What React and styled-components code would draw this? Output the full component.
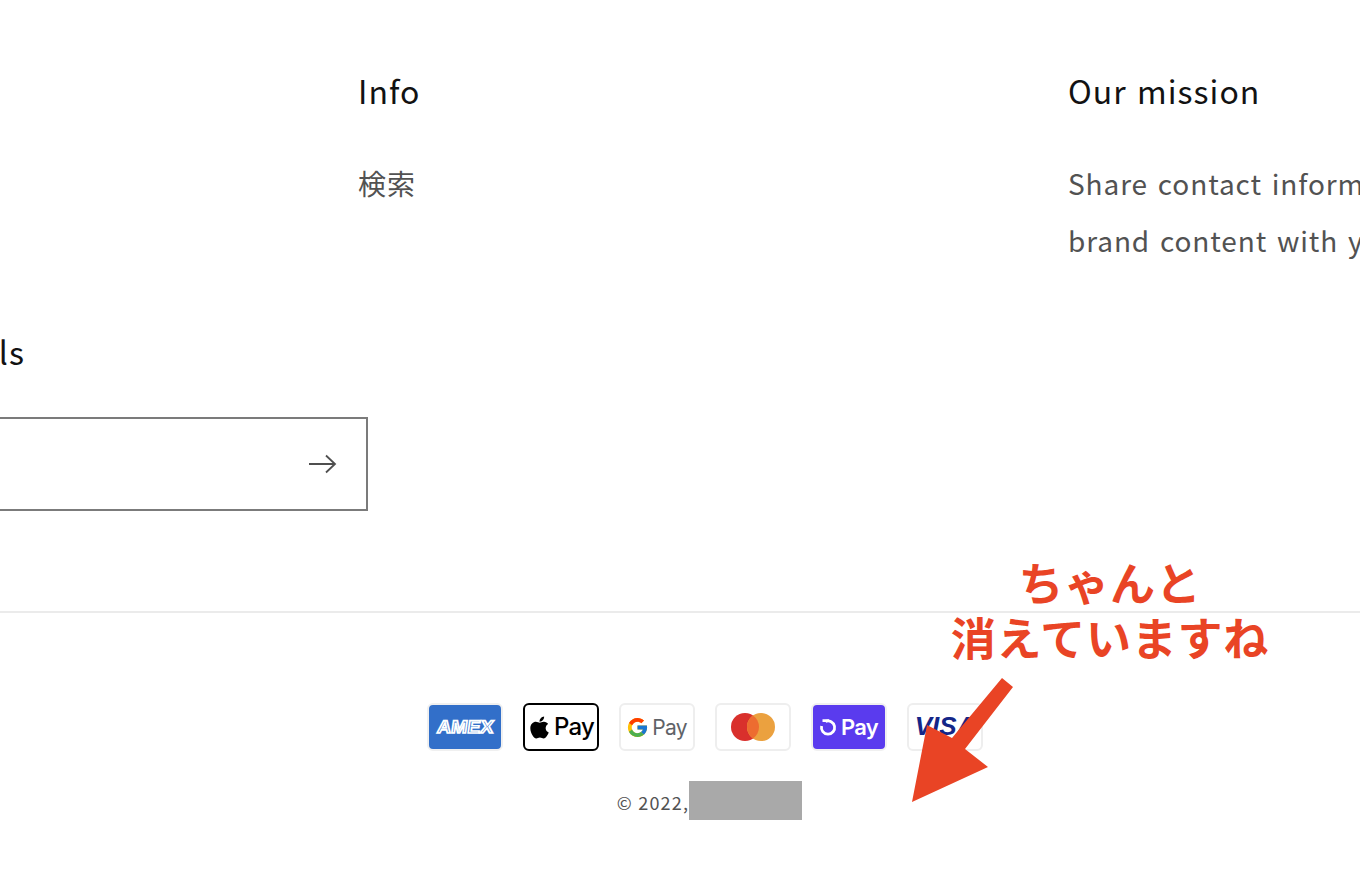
import styled, { createGlobalStyle } from 'styled-components'
import { FaApple } from 'react-icons/fa'
import { FcGoogle } from 'react-icons/fc'

const GlobalStyle = createGlobalStyle`
  html, body {
    margin: 0;
    padding: 0;
    background: #fff;
    overflow: hidden;
  }
  body {
    font-family: "Noto Sans CJK JP", "Noto Sans", sans-serif;
  }
`

const Page = styled.div`
  width: 1360px;
  height: 884px;
  position: relative;
  overflow: hidden;
  background: #fff;
`

const TopRow = styled.div`
  display: flex;
  padding: 62px 0 0 358px;
  height: 263px;
  box-sizing: content-box;
`

const Column = styled.div`
  flex: none;
  width: ${(props) => props.$width}px;
`

const Heading = styled.h2`
  margin: 0;
  font-size: 32px;
  line-height: 56px;
  font-weight: 400;
  letter-spacing: 1.05px;
  word-spacing: 2px;
  color: #121212;
  white-space: nowrap;
`

const BodyText = styled.p`
  margin: 37px 0 0;
  font-size: 28px;
  line-height: 57px;
  font-weight: 400;
  letter-spacing: 0.9px;
  word-spacing: 2.6px;
  color: #525252;
  white-space: nowrap;
`

const Newsletter = styled.section`
  width: 367px;
  margin-top: -2px;
`

const NewsletterHeading = styled(Heading)`
  display: flex;
  justify-content: flex-end;
  width: 25px;
`

const EmailBox = styled.div`
  display: flex;
  align-items: center;
  justify-content: flex-end;
  box-sizing: border-box;
  width: 388px;
  height: 94px;
  margin: 38px 0 0 -20px;
  padding-right: 29px;
  border: 2px solid #7b7b7b;
`

const Divider = styled.hr`
  margin: 100px 0 0;
  border: 0;
  height: 2px;
  background: #ebebeb;
`

const Bottom = styled.div`
  width: 1409px;
  display: flex;
  flex-direction: column;
  align-items: center;
  padding-top: 90px;
`

const PaymentList = styled.div`
  display: flex;
  gap: 20px;
`

const PayCard = styled.div`
  display: flex;
  align-items: center;
  justify-content: center;
  gap: ${(props) => props.$gap || 3}px;
  box-sizing: border-box;
  width: 76px;
  height: 48px;
  border-radius: 6px;
  border: 2px solid ${(props) => props.$border || '#eeeeee'};
  background: ${(props) => props.$bg || '#fff'};
  overflow: hidden;
`

const PayLabel = styled.span`
  font-family: "Inter", "Liberation Sans", sans-serif;
  font-size: ${(props) => props.$size}px;
  line-height: 1;
  font-weight: ${(props) => props.$weight || 400};
  letter-spacing: -0.8px;
  color: ${(props) => props.$color};
`

const Copyright = styled.div`
  display: flex;
  align-items: center;
  margin: 30px 0 0 10px;
  height: 39px;
  font-size: 18px;
  letter-spacing: 1.2px;
  color: #525252;
`

const CopyrightText = styled.span`
  margin-top: 2px;
`

const Redaction = styled.span`
  display: block;
  width: 113px;
  height: 39px;
  background: #a9a9a9;
`

const Note = styled.div`
  position: absolute;
  left: 910px;
  top: 554px;
  width: 400px;
  text-align: center;
  font-size: 45px;
  line-height: 55px;
  font-weight: 700;
  letter-spacing: 0.8px;
  color: #e94425;
`

const NoteArrow = styled.svg`
  position: absolute;
  left: 900px;
  top: 670px;
`

function AmexLogo() {
  return (
    <svg width="62" height="22" viewBox="0 0 62 22">
      <text
        x="31"
        y="17"
        textAnchor="middle"
        fontFamily="Liberation Sans, sans-serif"
        fontSize="18"
        fontWeight="700"
        textLength="56"
        lengthAdjust="spacingAndGlyphs"
        fill="#326fc9"
        stroke="#fff"
        strokeWidth="1.6"
        transform="skewX(-8) translate(2 0)"
      >
        AMEX
      </text>
    </svg>
  )
}

function MastercardLogo() {
  return (
    <svg width="46" height="30" viewBox="0 0 46 30">
      <circle cx="15" cy="15" r="14" fill="#d9302c" />
      <circle cx="31" cy="15" r="14" fill="#eba13f" />
      <path d="M23 3.5a14 14 0 0 1 0 23a14 14 0 0 1 0-23z" fill="#ed6c30" />
    </svg>
  )
}

function ShopRing() {
  return (
    <svg width="18" height="18" viewBox="0 0 18 18">
      <path
        d="M6.5 3.4A6.6 6.6 0 1 1 2.6 8"
        fill="none"
        stroke="#fff"
        strokeWidth="2.8"
      />
      <path d="M3.5 2.6h6.5" stroke="#fff" strokeWidth="2.8" />
    </svg>
  )
}

function VisaLogo() {
  return (
    <svg width="60" height="24" viewBox="0 0 60 24">
      <text
        x="30"
        y="20"
        textAnchor="middle"
        fontFamily="Liberation Sans, sans-serif"
        fontSize="26"
        fontWeight="700"
        fontStyle="italic"
        fill="#142688"
      >
        VISA
      </text>
    </svg>
  )
}

function SubmitArrow() {
  return (
    <svg width="29" height="20" viewBox="0 0 29 20">
      <path
        d="M1 10h26M18 1.5l9 8.5-9 8.5"
        fill="none"
        stroke="#4f4f4f"
        strokeWidth="1.8"
      />
    </svg>
  )
}

export default function App() {
  return (
    <Page>
      <GlobalStyle />
      <TopRow>
        <Column $width={710}>
          <Heading>Info</Heading>
          <BodyText>検索</BodyText>
        </Column>
        <Column $width={700}>
          <Heading>Our mission</Heading>
          <BodyText>
            Share contact information, store details, and
            <br />
            brand content with your customers.
          </BodyText>
        </Column>
      </TopRow>
      <Newsletter>
        <NewsletterHeading>Subscribe to our emails</NewsletterHeading>
        <EmailBox>
          <SubmitArrow />
        </EmailBox>
      </Newsletter>
      <Divider />
      <Bottom>
        <PaymentList>
          <PayCard $bg="#326fc9" $border="#f0f0f0">
            <AmexLogo />
          </PayCard>
          <PayCard $border="#000" $gap={2}>
            <FaApple size={25} color="#000" />
            <PayLabel $color="#000" $size={24} $weight={500}>Pay</PayLabel>
          </PayCard>
          <PayCard $gap={3}>
            <FcGoogle size={23} />
            <PayLabel $color="#5f6368" $size={21}>Pay</PayLabel>
          </PayCard>
          <PayCard>
            <MastercardLogo />
          </PayCard>
          <PayCard $bg="#5a3bee" $border="#f0f0f0" $gap={4}>
            <ShopRing />
            <PayLabel $color="#fff" $size={22} $weight={600}>Pay</PayLabel>
          </PayCard>
          <PayCard>
            <VisaLogo />
          </PayCard>
        </PaymentList>
        <Copyright>
          <CopyrightText>© 2022,</CopyrightText>
          <Redaction />
        </Copyright>
      </Bottom>
      <Note>
        ちゃんと
        <br />
        消えていますね
      </Note>
      <NoteArrow width="120" height="140" viewBox="0 0 120 140">
        <polygon
          points="102,8 113,17 65,79 88,97 12,132 27,55 52,68"
          fill="#e94425"
        />
      </NoteArrow>
    </Page>
  )
}
